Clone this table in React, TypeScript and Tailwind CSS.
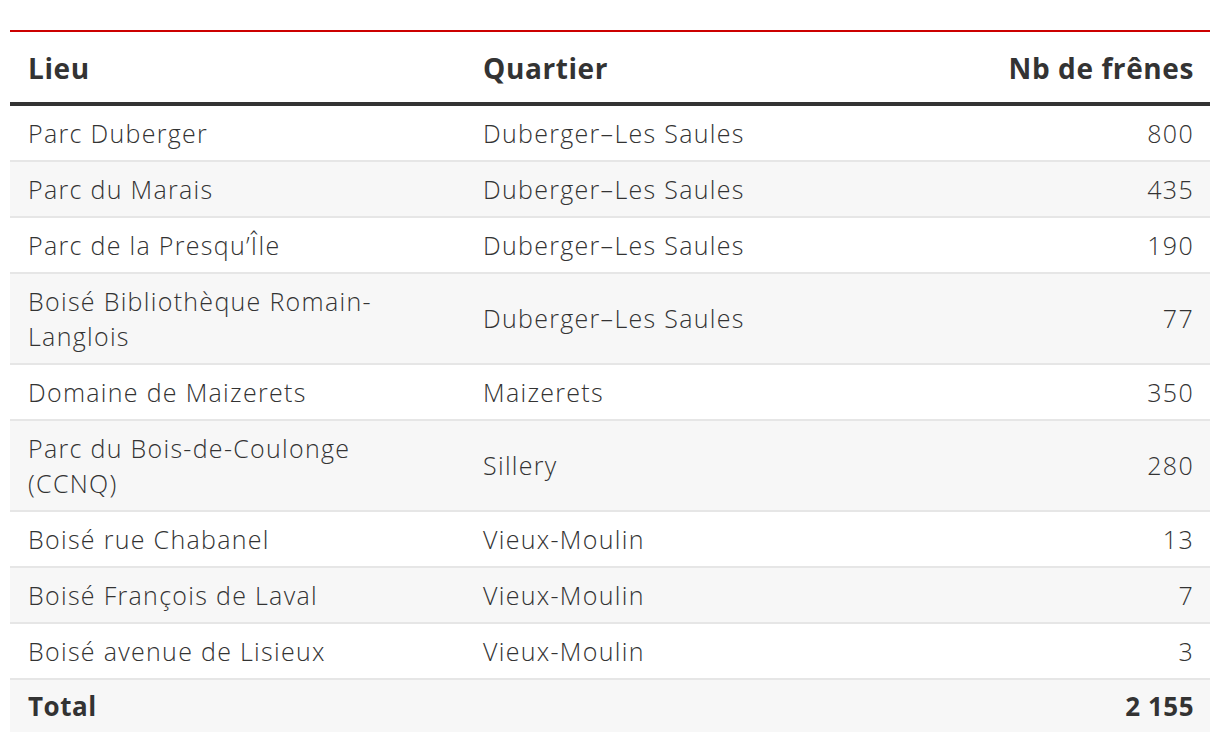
const rows: { lieu: string; quartier: string; nb: string }[] = [
  { lieu: "Parc Duberger", quartier: "Duberger–Les Saules", nb: "800" },
  { lieu: "Parc du Marais", quartier: "Duberger–Les Saules", nb: "435" },
  { lieu: "Parc de la Presqu’Île", quartier: "Duberger–Les Saules", nb: "190" },
  { lieu: "Boisé Bibliothèque Romain-Langlois", quartier: "Duberger–Les Saules", nb: "77" },
  { lieu: "Domaine de Maizerets", quartier: "Maizerets", nb: "350" },
  { lieu: "Parc du Bois-de-Coulonge (CCNQ)", quartier: "Sillery", nb: "280" },
  { lieu: "Boisé rue Chabanel", quartier: "Vieux-Moulin", nb: "13" },
  { lieu: "Boisé François de Laval", quartier: "Vieux-Moulin", nb: "7" },
  { lieu: "Boisé avenue de Lisieux", quartier: "Vieux-Moulin", nb: "3" },
];

export default function App() {
  return (
    <div className="min-h-screen bg-white px-[10px] pt-[30px] text-[#333] font-['Open_Sans',sans-serif]">
      <table className="w-full table-fixed border-collapse border-t-2 border-[#c00]">
        <colgroup>
          <col className="w-[455px]" />
          <col className="w-[455px]" />
          <col />
        </colgroup>
        <thead>
          <tr className="border-b-4 border-[#333] text-[28px] font-bold tracking-[0.6px]">
            <th className="h-[73px] px-[18px] pt-[2px] text-left">Lieu</th>
            <th className="px-[18px] pt-[2px] text-left">Quartier</th>
            <th className="px-[16px] pt-[2px] text-right">Nb de frênes</th>
          </tr>
        </thead>
        <tbody className="text-[25px] font-light leading-[35px] tracking-[1.3px]">
          {rows.map((r, i) => (
            <tr key={r.lieu} className={`border-b-2 border-[#e6e6e6] ${i % 2 === 1 ? "bg-[#f7f7f7]" : ""}`}>
              <td className="py-[9.5px] pl-[18px] pr-[30px]">{r.lieu}</td>
              <td className="px-[18px] py-[9.5px]">{r.quartier}</td>
              <td className="px-[16px] py-[9.5px] text-right">{r.nb}</td>
            </tr>
          ))}
          <tr className="bg-[#f7f7f7] text-[26px] font-bold tracking-[0.5px]">
            <td className="px-[18px] py-[8.5px]">Total</td>
            <td />
            <td className="px-[16px] py-[8.5px] text-right">2 155</td>
          </tr>
        </tbody>
      </table>
    </div>
  );
}
